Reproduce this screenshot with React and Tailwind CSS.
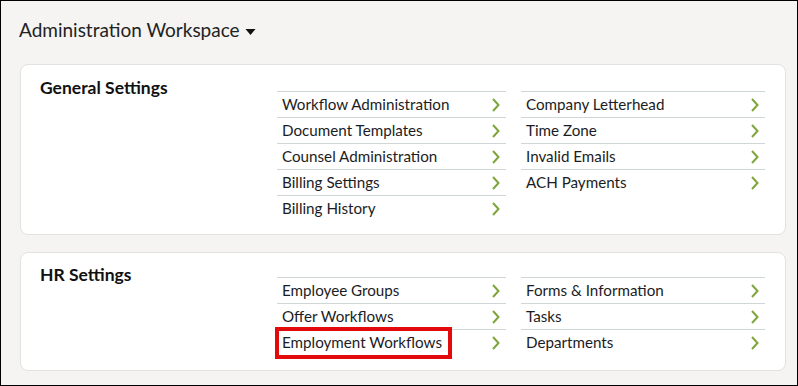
import React from 'react';

const sections = [
  {
    title: 'General Settings',
    pad: { head: 'pt-[12px]', list: 'pt-[26px]', bottom: 'pb-[13px]' },
    columns: [
      ['Workflow Administration', 'Document Templates', 'Counsel Administration', 'Billing Settings', 'Billing History'],
      ['Company Letterhead', 'Time Zone', 'Invalid Emails', 'ACH Payments'],
    ],
  },
  {
    title: 'HR Settings',
    pad: { head: 'pt-[11px]', list: 'pt-[24px]', bottom: 'pb-[15px]' },
    columns: [
      ['Employee Groups', 'Offer Workflows', 'Employment Workflows'],
      ['Forms & Information', 'Tasks', 'Departments'],
    ],
  },
];

const Chevron = () => (
  <svg width="8" height="14" viewBox="0 0 8 14" className="shrink-0">
    <path d="M1 1 L6.5 7 L1 13" fill="none" stroke="#7ea43a" strokeWidth="2" />
  </svg>
);

const LinkRow = ({ label, highlight }) => (
  <div className="relative flex h-[26px] items-center justify-between border-t border-[#cfd6d6] pl-[5px] pr-[6px]">
    <span className="text-[15.2px] leading-none text-[#1c1c24]">{label}</span>
    <Chevron />
    {highlight && (
      <div className="absolute left-[-2px] top-[-3px] h-[32px] w-[177px] border-4 border-[#e20a0a]" />
    )}
  </div>
);

const SettingsCard = ({ section }) => (
  <div className={`flex rounded-[8px] border border-[#e2e2e0] bg-white ${section.pad.bottom}`}>
    <div className={`w-[256px] shrink-0 pl-[19px] ${section.pad.head}`}>
      <h2 className="text-[17.5px] font-bold leading-[22px] text-[#111]">{section.title}</h2>
    </div>
    <div className={`flex ${section.pad.list}`}>
      {section.columns.map((col, i) => (
        <div key={i} className={i === 0 ? 'w-[229px] mr-[15px]' : 'w-[244px]'}>
          {col.map((label) => (
            <LinkRow key={label} label={label} highlight={label === 'Employment Workflows'} />
          ))}
        </div>
      ))}
    </div>
  </div>
);

export default function App() {
  return (
    <div
      className="h-[386px] w-[798px] border border-black bg-[#f5f4f2]"
      style={{ fontFamily: 'Lato, "Open Sans", sans-serif' }}
    >
      <div className="flex h-[63px] items-center pl-[18px] pb-[4px]">
        <span className="text-[19px] text-[#222]">Administration Workspace</span>
        <svg width="11" height="8" viewBox="0 0 11 8" className="ml-[5px] mt-[3px]">
          <path d="M0.5 1 H10.5 L5.5 7 Z" fill="#111" />
        </svg>
      </div>
      <div className="flex flex-col gap-[17px] pl-[19px] pr-[11px]">
        {sections.map((s) => (
          <SettingsCard key={s.title} section={s} />
        ))}
      </div>
    </div>
  );
}
